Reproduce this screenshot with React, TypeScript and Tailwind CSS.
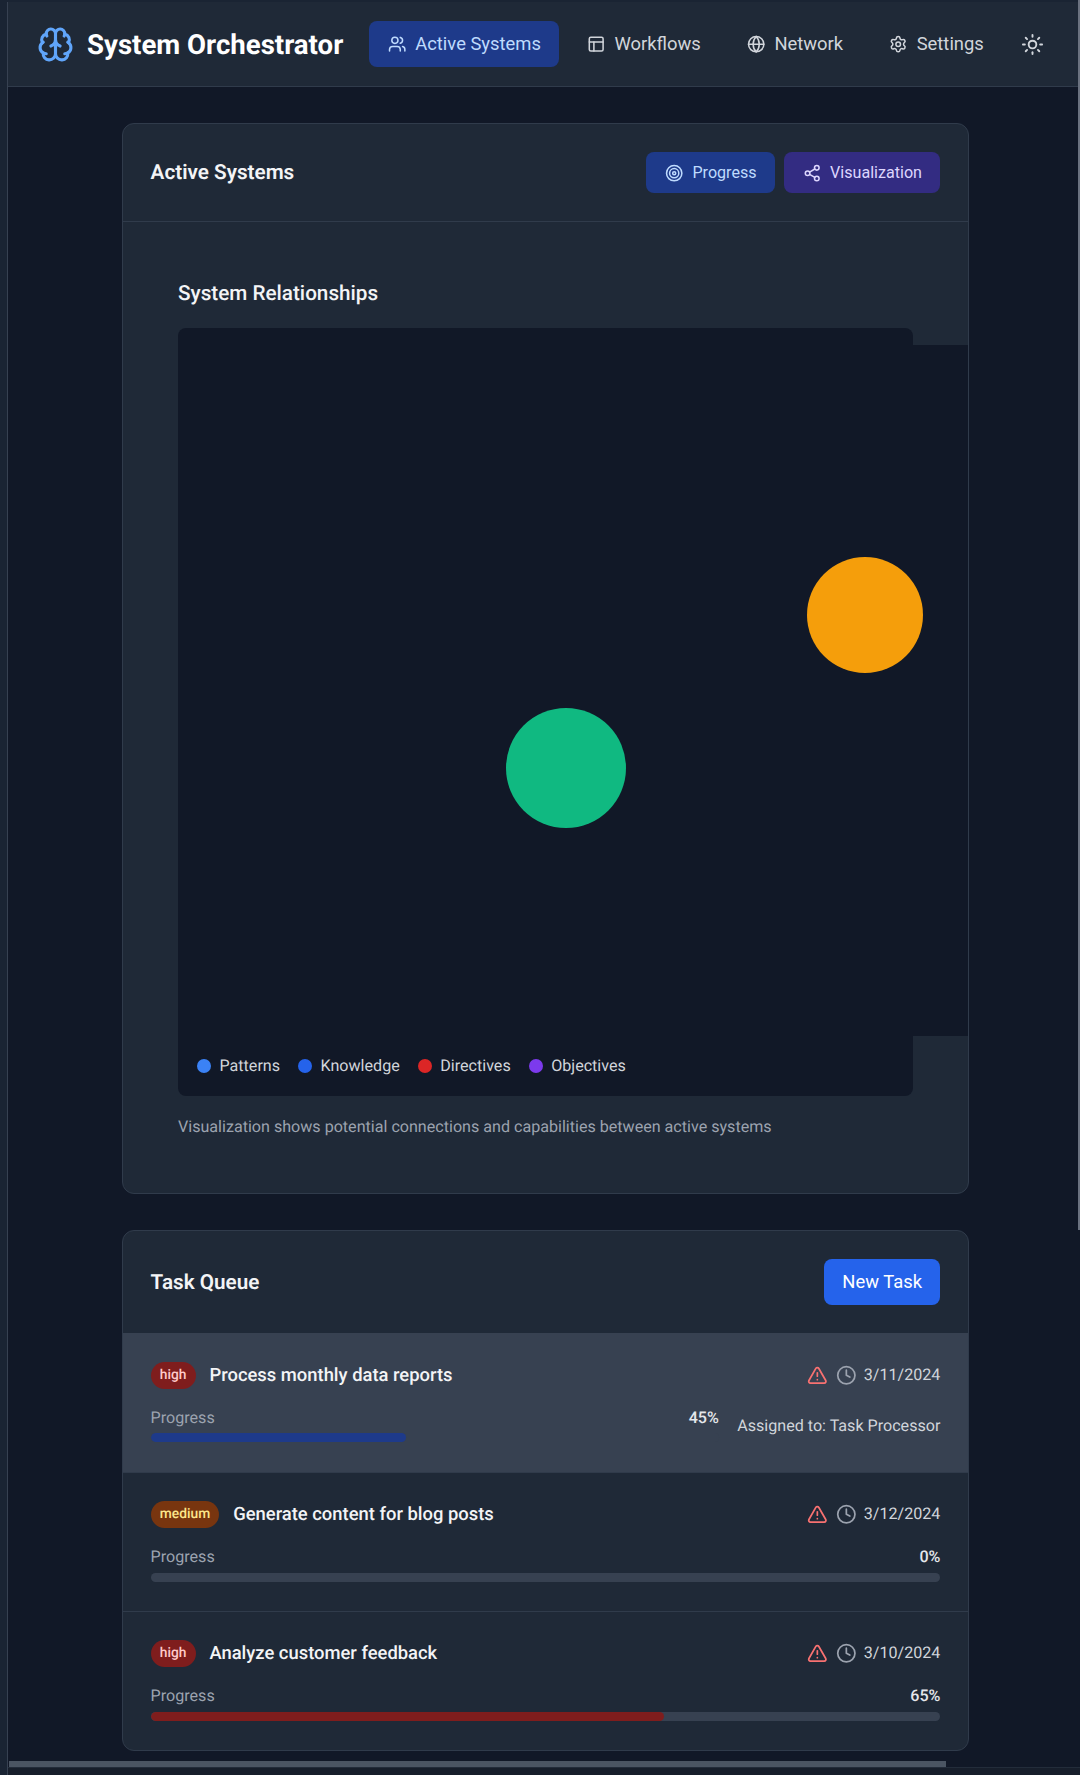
import { AlertTriangle, Clock, Globe, Layout, Settings, Share2, Sun, Target, Users } from "lucide-react";

const NAV = [
  { label: "Workflows", Icon: Layout },
  { label: "Network", Icon: Globe },
  { label: "Settings", Icon: Settings },
];

const LEGEND = [
  { label: "Patterns", color: "bg-[#3b82f6]" },
  { label: "Knowledge", color: "bg-[#2563eb]" },
  { label: "Directives", color: "bg-[#dc2626]" },
  { label: "Objectives", color: "bg-[#7c3aed]" },
];

function BrainIcon() {
  return (
    <svg width="37" height="37" viewBox="0 0 24 24" fill="none" stroke="#60a5fa" strokeWidth="2" strokeLinecap="round" strokeLinejoin="round">
      <path d="M12 5a3 3 0 1 0-5.997.125 4 4 0 0 0-2.526 5.77 4 4 0 0 0 .556 6.588A4 4 0 1 0 12 18Z" />
      <path d="M12 5a3 3 0 1 1 5.997.125 4 4 0 0 1 2.526 5.77 4 4 0 0 1-.556 6.588A4 4 0 1 1 12 18Z" />
      <path d="M15 13a4.5 4.5 0 0 1-3-4 4.5 4.5 0 0 1-3 4" />
      <path d="M17.599 6.5a3 3 0 0 0 .399-1.375" />
      <path d="M6.003 5.125A3 3 0 0 0 6.401 6.5" />
      <path d="M3.477 10.896a4 4 0 0 1 .585-.396" />
      <path d="M19.938 10.5a4 4 0 0 1 .585.396" />
      <path d="M6 18a4 4 0 0 1-1.967-.516" />
      <path d="M19.967 17.484A4 4 0 0 1 18 18" />
    </svg>
  );
}

function Task({ level, title, date, pct, bar, active, assigned }: { level: string; title: string; date: string; pct: number; bar: string; active?: boolean; assigned?: string }) {
  const badge = level === "high" ? "bg-[#7f1d1d] text-[#fecaca]" : "bg-[#78350f] text-[#fde68a]";
  return (
    <div className={`h-[139px] px-[27.6px] ${active ? "bg-[#374151] pt-[29px]" : "border-t border-[#303b4b] pt-[28px]"}`}>
      <div className="flex h-[27px] items-center justify-between">
        <div className="flex items-center gap-[13.8px]">
          <span className={`flex h-[27px] items-center rounded-full px-[9.2px] text-[13.8px] font-medium ${badge}`}>{level}</span>
          <span className="text-[18.4px] font-medium text-[#f3f4f6]">{title}</span>
        </div>
        <div className="flex items-center gap-[7.6px] text-[16.1px] text-[#d1d5db]">
          <AlertTriangle size={20.7} className="text-[#f87171]" />
          <Clock size={20.7} className="text-[#9ca3af]" />
          <span>{date}</span>
        </div>
      </div>
      <div className="mt-[20px] flex gap-[18.4px]">
        <div className="flex-1">
          <div className="flex h-[19px] items-center justify-between text-[16.1px]">
            <span className="text-[#9ca3af]">Progress</span>
            <span className="font-medium text-[#e5e7eb]">{pct}%</span>
          </div>
          <div className={`h-[9.2px] overflow-hidden rounded-full bg-[#374151] ${active ? "mt-[5px]" : "mt-[6px]"}`}>
            <div className={`h-full rounded-full ${bar}`} style={{ width: `${pct}%` }} />
          </div>
        </div>
        {assigned && <div className="mt-[5px] text-[16.1px] text-[#d1d5db]">Assigned to: {assigned}</div>}
      </div>
    </div>
  );
}

export default function App() {
  return (
    <div className="relative h-[1775px] w-full overflow-hidden bg-[#111827] font-['Roboto',sans-serif] [text-rendering:geometricPrecision]">
      <div className="h-[2px] bg-[#1a2433]" />
      <div className="flex h-[1773px]">
        <div className="w-[8px] shrink-0 border-r border-[#374151] bg-[#1a2433]" />
        <div className="min-w-0 flex-1">
          <header className="flex h-[85px] items-center border-b border-[#303b4b] bg-[#1f2937] pl-[29px]">
            <BrainIcon />
            <h1 className="ml-[13px] pt-[2px] text-[27.6px] font-bold text-white">System Orchestrator</h1>
            <nav className="ml-[26px] flex items-center gap-[9.2px] text-[18.4px]">
              <button className="flex h-[46px] items-center gap-[9.2px] rounded-lg bg-[#1e3a8a] px-[18.4px] text-[#bfdbfe]">
                <Users size={18.4} />
                Active Systems
              </button>
              {NAV.map(({ label, Icon }) => (
                <button key={label} className="flex h-[46px] items-center gap-[9.2px] rounded-lg px-[18.4px] text-[#d1d5db]">
                  <Icon size={18.4} />
                  {label}
                </button>
              ))}
              <span className="ml-[9.2px] text-[#d1d5db]">
                <Sun size={23} />
              </span>
            </nav>
          </header>
          <main className="flex flex-col gap-[36px] pl-[114px] pr-[111px] pt-[36px]">
            <section className="h-[1071px] overflow-hidden rounded-xl border border-[#303b4b] bg-[#1f2937]">
              <div className="flex h-[98px] items-center justify-between border-b border-[#303b4b] px-[27.6px]">
                <h2 className="pt-[3px] text-[20.7px] font-semibold text-[#f3f4f6]">Active Systems</h2>
                <div className="flex gap-[9.2px] text-[16.1px]">
                  <button className="flex h-[41px] items-center gap-[9.2px] rounded-lg bg-[#1e3a8a] px-[18.4px] pt-[1px] text-[#bfdbfe]">
                    <Target size={18.4} />
                    Progress
                  </button>
                  <button className="flex h-[41px] items-center gap-[9.2px] rounded-lg bg-[#332c82] px-[18.4px] pt-[1px] text-[#ddd6fe]">
                    <Share2 size={18.4} />
                    Visualization
                  </button>
                </div>
              </div>
              <div className="px-[55px] pt-[59px]">
                <h3 className="text-[20.7px] font-medium leading-[26px] text-[#f3f4f6]">System Relationships</h3>
                <div className="relative mt-[21px] h-[768px] w-[735px] rounded-lg bg-[#111827]">
                  <div className="absolute left-0 top-[17px] h-[691px] w-[900px] bg-[#111827]" />
                  <div className="absolute left-[328px] top-[380px] h-[120px] w-[120px] rounded-full bg-[#10b981]" />
                  <div className="absolute left-[629px] top-[229px] h-[116px] w-[116px] rounded-full bg-[#f59e0b]" />
                  <div className="absolute bottom-[18px] left-[19px] flex gap-[18px] text-[16.1px] text-[#d1d5db]">
                    {LEGEND.map((l) => (
                      <div key={l.label} className="flex items-center gap-[8.5px]">
                        <span className={`h-[14px] w-[14px] rounded-full ${l.color}`} />
                        {l.label}
                      </div>
                    ))}
                  </div>
                </div>
                <p className="mt-[19px] text-[16.1px] text-[#9ca3af]">Visualization shows potential connections and capabilities between active systems</p>
              </div>
            </section>
            <section className="h-[521px] overflow-hidden rounded-xl border border-[#303b4b] bg-[#1f2937]">
              <div className="flex h-[102px] items-center justify-between px-[27.6px]">
                <h2 className="pt-[3px] text-[20.7px] font-semibold text-[#f3f4f6]">Task Queue</h2>
                <button className="h-[46px] rounded-lg bg-[#2563eb] px-[18.4px] text-[18.4px] text-white">New Task</button>
              </div>
              <Task active level="high" title="Process monthly data reports" date="3/11/2024" pct={45} bar="bg-[#1e3a8a]" assigned="Task Processor" />
              <Task level="medium" title="Generate content for blog posts" date="3/12/2024" pct={0} bar="bg-[#78350f]" />
              <Task level="high" title="Analyze customer feedback" date="3/10/2024" pct={65} bar="bg-[#7f1d1d]" />
            </section>
          </main>
        </div>
      </div>
      <div className="absolute right-0 top-0 h-[1230px] w-[2px] bg-[#6b7280]" />
      <div className="absolute bottom-[8px] left-[9px] h-[6px] w-[937px] bg-[#4b5563]" />
      <div className="absolute bottom-0 left-[8px] right-0 h-[8px] border-t border-[#232c3a] bg-[#171e2b]" />
    </div>
  );
}
